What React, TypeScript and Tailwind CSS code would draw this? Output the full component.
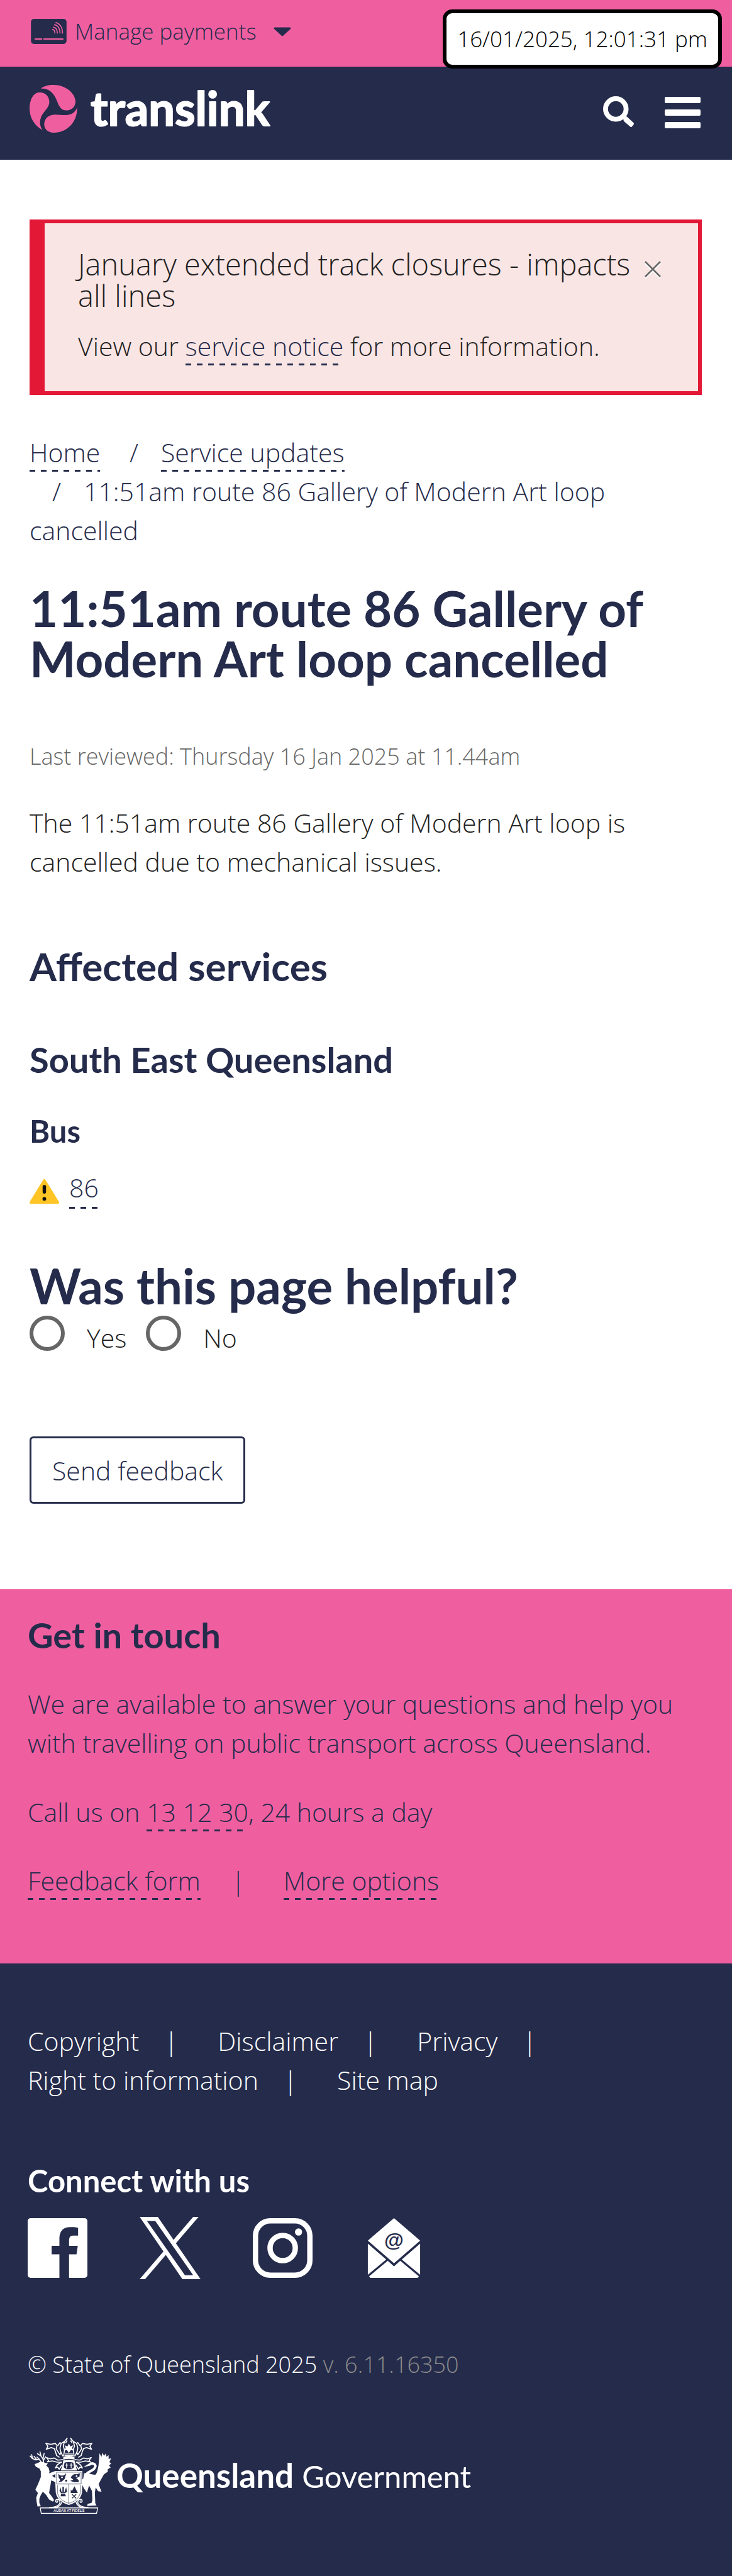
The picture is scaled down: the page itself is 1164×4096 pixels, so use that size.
import type { ReactNode } from "react";

const NAVY = "#252b4b";
const PINK = "#ef5fa0";

const dashed =
  "pb-[3px] bg-[repeating-linear-gradient(90deg,#252b4b_0_9px,transparent_9px_18px)] bg-[length:100%_3px] bg-bottom bg-no-repeat";

function DashedLink({ children }: { children: ReactNode }) {
  return (
    <a href="#" className={"text-[#252b4b] " + dashed}>
      {children}
    </a>
  );
}

function PaymentCardIcon() {
  return (
    <svg className="h-[40px] w-[57px] shrink-0" viewBox="59 57 174 123" aria-hidden="true">
      <rect x="59" y="57" width="174" height="123" rx="15" fill={NAVY} />
      <g fill="none" stroke={PINK} strokeLinecap="round">
        <path d="M80 156H111M123 156H215" strokeWidth="7" />
        <path
          d="M165 109C172 110 176 117 176 127M169 98C181 99 188 111 188 127M174 86C191 88 201 105 201 127M181 75C201 80 214 100 213 127"
          strokeWidth="5"
        />
      </g>
    </svg>
  );
}

function TranslinkLogo() {
  return (
    <a href="#" aria-label="Translink home" className="flex items-center gap-[19px]">
      <svg className="size-[76px]" viewBox="54 380 232 232" fill={PINK} aria-hidden="true">
        <path d="M108 398C123 386 146 380 170 380C229 380 277 420 277 463C275 490 254 504 233 504C206 504 196 481 188 460C175 425 151 394 108 398Z" />
        <path d="M103 417C134 417 150 440 150 464C149 491 127 503 112 531C102 552 102 580 117 599C79 579 54 541 54 493C56 450 72 417 103 417Z" />
        <path d="M285 490C287 560 237 612 172 612C140 612 125 592 125 570C127 540 148 524 180 524C216 524 264 541 285 490Z" />
      </svg>
      <svg className="h-[92px] w-[300px]" viewBox="0 0 300 92" aria-hidden="true">
        <text
          x="2"
          y="73"
          fontFamily="Lato, sans-serif"
          fontWeight="700"
          fontSize="74"
          fill="white"
          stroke="white"
          strokeWidth="2"
          strokeLinejoin="round"
        >
          translink
        </text>
      </svg>
    </a>
  );
}

function SearchIcon() {
  return (
    <svg className="size-[49px]" viewBox="60 42 150 150" aria-hidden="true">
      <circle cx="122" cy="104" r="50" fill="none" stroke="white" strokeWidth="24" />
      <path
        d="M164 148L172 146L204 176L196 186L166 160Z"
        fill="white"
        stroke="white"
        strokeWidth="12"
        strokeLinejoin="round"
      />
    </svg>
  );
}

function MenuIcon() {
  return (
    <span className="flex w-[57px] flex-col gap-[10px]" aria-hidden="true">
      <span className="h-[10px] rounded-[2px] bg-white" />
      <span className="h-[10px] rounded-[2px] bg-white" />
      <span className="h-[10px] rounded-[2px] bg-white" />
    </span>
  );
}

function WarningIcon() {
  return (
    <svg className="mb-[7px] h-[41px] w-[47px]" viewBox="0 0 48 41" role="img" aria-label="Warning">
      <path d="M24 2.500L46 38.500H2Z" fill="#ffc425" stroke="#ffc425" strokeWidth="4" strokeLinejoin="round" />
      <rect x="21.200" y="10" width="5.600" height="14" rx="2.400" fill="#111" />
      <circle cx="24" cy="32.500" r="3" fill="#111" />
    </svg>
  );
}

function FacebookIcon() {
  return (
    <svg className="size-[95px]" viewBox="0 0 96 96" fill="white" aria-hidden="true">
      <path d="M5 0H91C94 0 96 2 96 5V91C96 94 94 96 91 96H66.500V58H78.500L80.500 44.500H66.500V36C66.500 31 68 28 73 28H81V15.500C77 14.500 73 14.500 68 14.500C57 14.500 51 21 51 33V44.500H38.500V58H51V96H5C2 96 0 94 0 91V5C0 2 2 0 5 0Z" />
    </svg>
  );
}

function XIcon() {
  return (
    <svg className="h-[99px] w-[97px]" viewBox="0 0 1200 1227" fill="white" aria-hidden="true">
      <path d="M714.163 519.284L1160.89 0H1055.03L667.137 450.887L357.328 0H0L468.492 681.821L0 1226.37H105.866L515.491 750.218L842.672 1226.37H1200L714.137 519.284H714.163ZM569.165 687.828L521.697 619.934L144.011 79.6944H306.615L611.412 515.685L658.88 583.579L1055.08 1150.3H892.476L569.165 687.854V687.828Z" />
    </svg>
  );
}

function InstagramIcon() {
  return (
    <svg className="size-[95px]" viewBox="0 0 96 96" fill="none" stroke="white" strokeWidth="8.600" aria-hidden="true">
      <rect x="4.300" y="4.300" width="87.400" height="87.400" rx="24" />
      <circle cx="48" cy="48" r="20.300" />
      <circle cx="73.500" cy="22.300" r="5.800" fill="white" stroke="none" />
    </svg>
  );
}

function MailIcon() {
  return (
    <svg className="h-[95px] w-[95px]" viewBox="-5 0 96 96" fill="white" aria-hidden="true">
      <path d="M42 0L84 36L42 72.500L0 36Z" />
      <path d="M0 41L29.500 66.500L0 91Z" />
      <path d="M84 41L54.500 66.500L84 91Z" />
      <path d="M32 68.500L42 77.500L52 68.500L82 93.500L80 96H4L2 93.500Z" />
      <text
        x="42"
        y="46"
        textAnchor="middle"
        fontFamily="'Liberation Sans', sans-serif"
        fontWeight="700"
        fontSize="32"
        fill={NAVY}
      >
        @
      </text>
    </svg>
  );
}

function Mantling() {
  return (
    <g fill="none" stroke="white" strokeWidth="5" strokeLinejoin="round" strokeLinecap="round">
      <path d="M133 108L156 112L178 108L186 118L182 134L200 162L206 150" />
      <path d="M133 108L142 122L134 136L158 128L172 132L178 146L184 166L196 174" />
      <path d="M190 118L200 104L206 108L200 130L204 150L214 168" />
      <path d="M206 108L222 98L234 84M222 98L216 120L222 140L218 166" />
      <path d="M136 176L154 182L172 178L190 188L214 186" />
      <path d="M136 176L146 190L140 196L164 192L186 198L208 198" />
      <path d="M206 198L188 210L178 226L190 222L196 232L208 214" />
      <path d="M228 104L234 96M252 84L258 94" />
      <path d="M150 416C184 416 208 400 198 382C190 372 176 378 180 388C184 394 192 390 188 384" />
      <path d="M176 416C192 414 206 404 208 392" />
    </g>
  );
}

function CoatOfArms() {
  return (
    <svg className="h-[121px] w-[131px]" viewBox="54 80 396 366" fill="white" aria-hidden="true">
      <Mantling />
      <g transform="translate(486 0) scale(-1 1)">
        <Mantling />
      </g>
      <path d="M243 108L250 122L264 116L258 130L268 142L252 140L243 154L234 140L218 142L228 130L222 116L236 122Z" />
      <path d="M224 158H262M222 166H264" stroke="white" strokeWidth="4" />
      <path d="M216 172Q243 164 270 172V186Q243 178 216 186Z" />
      <path d="M216 190Q243 184 270 190L276 214L282 238H204L212 214Z" />
      <path d="M222 200Q243 194 264 200L268 222L256 232H230L218 222Z" fill={NAVY} />
      <path d="M232 203V228M225 212H239M254 203V228M247 212H261" stroke="white" strokeWidth="4" />

      <g fill="none" stroke="white" strokeWidth="5" strokeLinecap="round">
        <path d="M112 200L100 184L84 187L68 181L57 169M88 186L76 170M68 180L64 162M100 184L90 174" />
        <path d="M122 200L118 182L108 168L92 157M118 182L124 156M109 168L104 148M121 188L131 172" />
      </g>
      <path d="M78 208L100 199L112 196L130 202L142 204L134 214L146 226L150 242L148 252L178 240L180 254L162 264L178 274L190 290L186 300L170 290L158 286L154 312L150 332L148 346L162 364L172 380L166 388L148 378L134 356L118 340L108 356L101 374L101 394L108 410L92 411L88 390L86 368L94 346L82 330L96 300L108 270L108 242L102 229L84 220Z" />

      <path d="M350 198L312 222L348 214Z" />
      <path
        d="M345 206C366 198 378 215 364 230C350 244 326 244 320 272"
        fill="none"
        stroke="white"
        strokeWidth="12"
      />
      <path d="M316 252C330 245 350 260 372 258C385 240 388 200 390 155L400 172L404 152L412 168L420 156L424 172L434 164L434 182L446 180L438 198L447 204L436 214L444 224L430 232L430 244L412 256L396 284L386 304L400 340L384 338L372 320L368 345L370 395L376 406L330 408L334 398L352 394L356 380L354 336L340 310L330 345L316 325L304 300L302 285L312 278Z" />

      <path d="M178 240H308V306L306 345C300 380 270 396 243 404C215 396 186 380 180 345L178 306Z" />
      <path
        d="M184 246H302V303H184ZM243 303V396M188 308V345C194 372 216 388 243 396C270 388 292 372 298 345V308"
        fill="none"
        stroke={NAVY}
        strokeWidth="2"
      />
      <g fill={NAVY}>
        <path d="M192 254L202 262L218 262L230 252L226 268L222 280L208 292L192 294L202 284L194 272Z" />
        <circle cx="230" cy="287" r="5" />
        <path d="M252 272Q262 252 280 256L296 252L294 268L278 274L290 284V294H268L250 288L264 282Z" />
        <path d="M202 318L208 342H222L230 318L234 340L224 348H206L198 336ZM212 316H219V340H212Z" />
        <path d="M205 352H226L228 362H204Z" />
        <path d="M270 314L286 346H252V330L258 336Z" />
      </g>
      <path d="M258 352L278 372M278 352L258 372" stroke={NAVY} strokeWidth="4" />
      <g fill="white">
        <circle cx="210" cy="271" r="4" />
        <circle cx="280" cy="265" r="4" />
      </g>

      <path d="M105 418H382L376 444H110Z" fill={NAVY} stroke="white" strokeWidth="4" />
      <text
        x="244"
        y="438"
        textAnchor="middle"
        fontFamily="Lato, sans-serif"
        fontWeight="700"
        fontSize="17"
      >
        AUDAX AT FIDELIS
      </text>
    </svg>
  );
}

function Header() {
  return (
    <header>
      <div className="relative bg-[#ef5fa0] px-[49px] pt-[20px] pb-[26px]">
        <button type="button" className="flex h-[60px] items-center text-[35px] leading-[60px]">
          <PaymentCardIcon />
          <span className="ml-[13px]">Manage payments</span>
          <svg className="ml-[27px] h-[15px] w-[28px]" viewBox="0 0 28 15" aria-hidden="true">
            <path d="M2 2H26L14 13Z" fill={NAVY} stroke={NAVY} strokeWidth="3" strokeLinejoin="round" />
          </svg>
        </button>
        <time className="absolute top-[15px] right-[16px] z-10 flex h-[94px] w-[444px] items-center justify-center rounded-[15px] border-[6px] border-black bg-white text-[35px] whitespace-nowrap text-black">
          16/01/2025, 12:01:31 pm
        </time>
      </div>
      <div className="flex items-center justify-between bg-[#252b4b] pt-[21px] pr-[50px] pb-[35px] pl-[47px]">
        <TranslinkLogo />
        <div className="flex items-center gap-[49px] pt-[8px]">
          <button type="button" aria-label="Search">
            <SearchIcon />
          </button>
          <button type="button" aria-label="Menu" className="pt-[4px]">
            <MenuIcon />
          </button>
        </div>
      </div>
    </header>
  );
}

function Alert() {
  return (
    <section className="mt-[95px] flex items-start justify-between border-y-[6px] border-r-[6px] border-l-[24px] border-[#e31837] bg-[#f9e5e4] pt-[40px] pr-[58px] pb-[41px] pl-[53px] text-[#222222]">
      <div className="min-w-0 flex-1">
        <h2 className="text-[47px] leading-[50px]">January extended track closures - impacts all lines</h2>
        <p className="mt-[24px]">
          View our <DashedLink>service notice</DashedLink> for more information.
        </p>
      </div>
      <button type="button" aria-label="Close" className="mt-[20px]">
        <svg className="size-[28px]" viewBox="0 0 26 28" fill="none" strokeWidth="2.500" aria-hidden="true">
          <path d="M1 4L25 27M25 4L1 27" stroke="white" />
          <path d="M1 1L25 25M25 1L1 25" stroke="#666666" />
        </svg>
      </button>
    </section>
  );
}

function Breadcrumbs() {
  return (
    <nav aria-label="Breadcrumb" className="mt-[60px]">
      <ol>
        <li className="inline">
          <DashedLink>Home</DashedLink>
        </li>{" "}
        <li className="inline">
          <span className="mx-[36px]">/</span>
          <DashedLink>Service updates</DashedLink>
        </li>
        <li>
          <span className="mx-[36px]">/</span>11:51am route 86 Gallery of Modern Art loop cancelled
        </li>
      </ol>
    </nav>
  );
}

function Feedback() {
  return (
    <form className="pt-[82px]" onSubmit={(e) => e.preventDefault()}>
      <fieldset>
        <legend className="font-['Lato',sans-serif] text-[78px] leading-[80px] font-bold">
          Was this page helpful?
        </legend>
        <div className="mt-[8px] flex gap-[31px] text-[#222222]">
          {["Yes", "No"].map((option) => (
            <label key={option} className="flex gap-[35px]">
              <input
                type="radio"
                name="helpful"
                value={option}
                className="size-[56px] appearance-none rounded-full border-[6px] border-[#666666] bg-white checked:bg-[#252b4b]"
              />
              <span className="mt-[4px]">{option}</span>
            </label>
          ))}
        </div>
      </fieldset>
      <button
        type="submit"
        className="mt-[126px] mb-[136px] block h-[107px] rounded-[6px] border-[3px] border-[#252b4b] px-[33px]"
      >
        Send feedback
      </button>
    </form>
  );
}

function GetInTouch() {
  return (
    <section className="bg-[#ef5fa0] px-[44px] pt-[43px] pb-[101px]">
      <h2 className="font-['Lato',sans-serif] text-[56px] leading-[60px] font-bold">Get in touch</h2>
      <p className="mt-[48px]">
        We are available to answer your questions and help you with travelling on public transport across Queensland.
      </p>
      <p className="mt-[48px]">
        Call us on <DashedLink>13 12 30</DashedLink>, 24 hours a day
      </p>
      <p className="mt-[47px]">
        <DashedLink>Feedback form</DashedLink>
        <span className="mr-[61px] ml-[49px]">|</span>
        <DashedLink>More options</DashedLink>
      </p>
    </section>
  );
}

function Footer() {
  const links = ["Copyright", "Disclaimer", "Privacy", "Right to information", "Site map"];
  return (
    <footer className="bg-[#252b4b] px-[44px] pt-[92px] pb-[99px] text-white">
      <ul className="flex flex-wrap gap-x-[63px]">
        {links.map((label, i) => (
          <li key={label}>
            <a href="#">{label}</a>
            {i < links.length - 1 && <span className="ml-[40px]">|</span>}
          </li>
        ))}
      </ul>
      <h2 className="mt-[99px] font-['Lato',sans-serif] text-[49px] leading-[60px] font-bold">Connect with us</h2>
      <ul className="mt-[28px] flex items-center gap-[83px]">
        <li>
          <a href="#" aria-label="Facebook" className="block">
            <FacebookIcon />
          </a>
        </li>
        <li>
          <a href="#" aria-label="X" className="block">
            <XIcon />
          </a>
        </li>
        <li>
          <a href="#" aria-label="Instagram" className="block">
            <InstagramIcon />
          </a>
        </li>
        <li>
          <a href="#" aria-label="Email" className="block">
            <MailIcon />
          </a>
        </li>
      </ul>
      <p className="mt-[105px] text-[36px]">
        © State of Queensland 2025 <span className="text-[#8c8c8c]">v. 6.11.16350</span>
      </p>
      <a
        href="#"
        aria-label="Queensland Government"
        className="mt-[85px] flex items-center gap-[7px] pl-[3px] font-['Lato',sans-serif]"
      >
        <CoatOfArms />
        <span className="flex items-baseline gap-[13px]">
          <span className="text-[53px] font-bold">Queensland</span>
          <span className="text-[49px] font-normal">Government</span>
        </span>
      </a>
    </footer>
  );
}

export default function App() {
  return (
    <div className="bg-white font-['Open_Sans',sans-serif] text-[41px] leading-[62px] font-light text-[#252b4b]">
      <Header />
      <main className="pr-[48px] pl-[47px]">
        <Alert />
        <Breadcrumbs />
        <h1 className="mt-[53px] font-['Lato',sans-serif] text-[78px] leading-[80px] font-bold">
          11:51am route 86 Gallery of Modern Art loop cancelled
        </h1>
        <p className="mt-[85px] text-[36px] text-[#666666]">Last reviewed: Thursday 16 Jan 2025 at 11.44am</p>
        <p className="mt-[43px] text-[#222222]">
          The 11:51am route 86 Gallery of Modern Art loop is cancelled due to mechanical issues.
        </p>
        <h2 className="mt-[95px] font-['Lato',sans-serif] text-[62px] leading-[80px] font-bold">Affected services</h2>
        <h3 className="mt-[79px] font-['Lato',sans-serif] text-[56px] leading-[60px] font-bold">
          South East Queensland
        </h3>
        <h4 className="mt-[53px] font-['Lato',sans-serif] text-[49px] leading-[60px] font-bold">Bus</h4>
        <div className="mt-[29px] flex items-end gap-[16px]">
          <WarningIcon />
          <DashedLink>86</DashedLink>
        </div>
        <Feedback />
      </main>
      <GetInTouch />
      <Footer />
    </div>
  );
}
